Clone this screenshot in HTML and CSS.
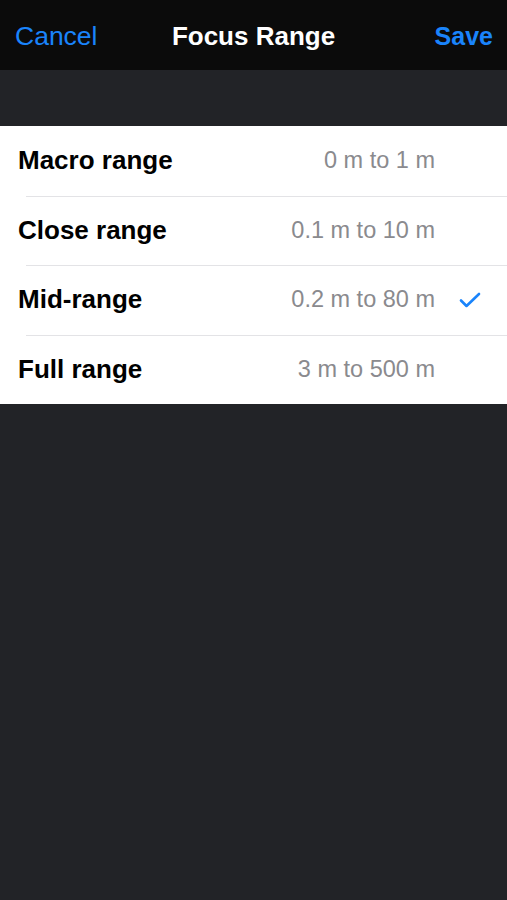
FILE: index.html
```html
<!DOCTYPE html>
<html lang="en">
  <head>
    <meta charset="UTF-8" />
    <meta name="viewport" content="width=device-width, initial-scale=1.0" />
    <title>Focus Range</title>
    <link rel="stylesheet" href="styles.css">
  </head>
  <body>
    <div class="navbar">
      <span class="nav-btn">Cancel</span>
      <span class="nav-title">Focus Range</span>
      <span class="nav-btn save">Save</span>
    </div>
    <div class="spacer"></div>
    <ul class="range-list">
      <li class="range-item">
        <span class="range-name">Macro range</span>
        <span class="range-value">0 m to 1 m</span>
        <span class="check"></span>
      </li>
      <li class="range-item">
        <span class="range-name">Close range</span>
        <span class="range-value">0.1 m to 10 m</span>
        <span class="check"></span>
      </li>
      <li class="range-item">
        <span class="range-name">Mid-range</span>
        <span class="range-value">0.2 m to 80 m</span>
        <span class="check">
          <svg width="22" height="16" viewBox="0 0 22 16">
            <polyline points="2,8.5 7.5,14 20,2" fill="none" stroke="#1a84fb" stroke-width="2.6" stroke-linecap="round" stroke-linejoin="round" />
          </svg>
        </span>
      </li>
      <li class="range-item">
        <span class="range-name">Full range</span>
        <span class="range-value">3 m to 500 m</span>
        <span class="check"></span>
      </li>
    </ul>
  </body>
</html>
```

FILE: styles.css
```css
body {
  margin: 0;
  background-color: #222327;
  font-family: "Liberation Sans", Arial, sans-serif;
}
.navbar {
  height: 70px;
  box-sizing: border-box;
  background-color: #0b0b0b;
  display: flex;
  align-items: center;
  justify-content: space-between;
  padding: 3px 14px 0 15px;
  position: relative;
}
.nav-btn {
  color: #1a84fb;
  font-size: 26.5px;
}
.nav-btn.save {
  font-size: 25px;
  font-weight: bold;
}
.nav-title {
  color: #fff;
  font-size: 26px;
  font-weight: bold;
  position: absolute;
  left: 0;
  right: 0;
  text-align: center;
  pointer-events: none;
}
.spacer {
  height: 56px;
}
.range-list {
  list-style: none;
  margin: 0;
  padding: 0;
  background-color: #fff;
}
.range-item {
  height: 69.5px;
  display: flex;
  align-items: center;
  padding-left: 18px;
  position: relative;
}
.range-item + .range-item::before {
  content: "";
  position: absolute;
  top: 0;
  left: 26px;
  right: 0;
  height: 1px;
  background-color: #e3e3e6;
}
.range-name {
  flex: 1;
  font-size: 26px;
  font-weight: bold;
  color: #000;
}
.range-value {
  font-size: 23.5px;
  color: #8a8a8e;
}
.check {
  width: 72px;
  display: flex;
  justify-content: flex-start;
  padding-left: 24px;
  box-sizing: border-box;
}
```
